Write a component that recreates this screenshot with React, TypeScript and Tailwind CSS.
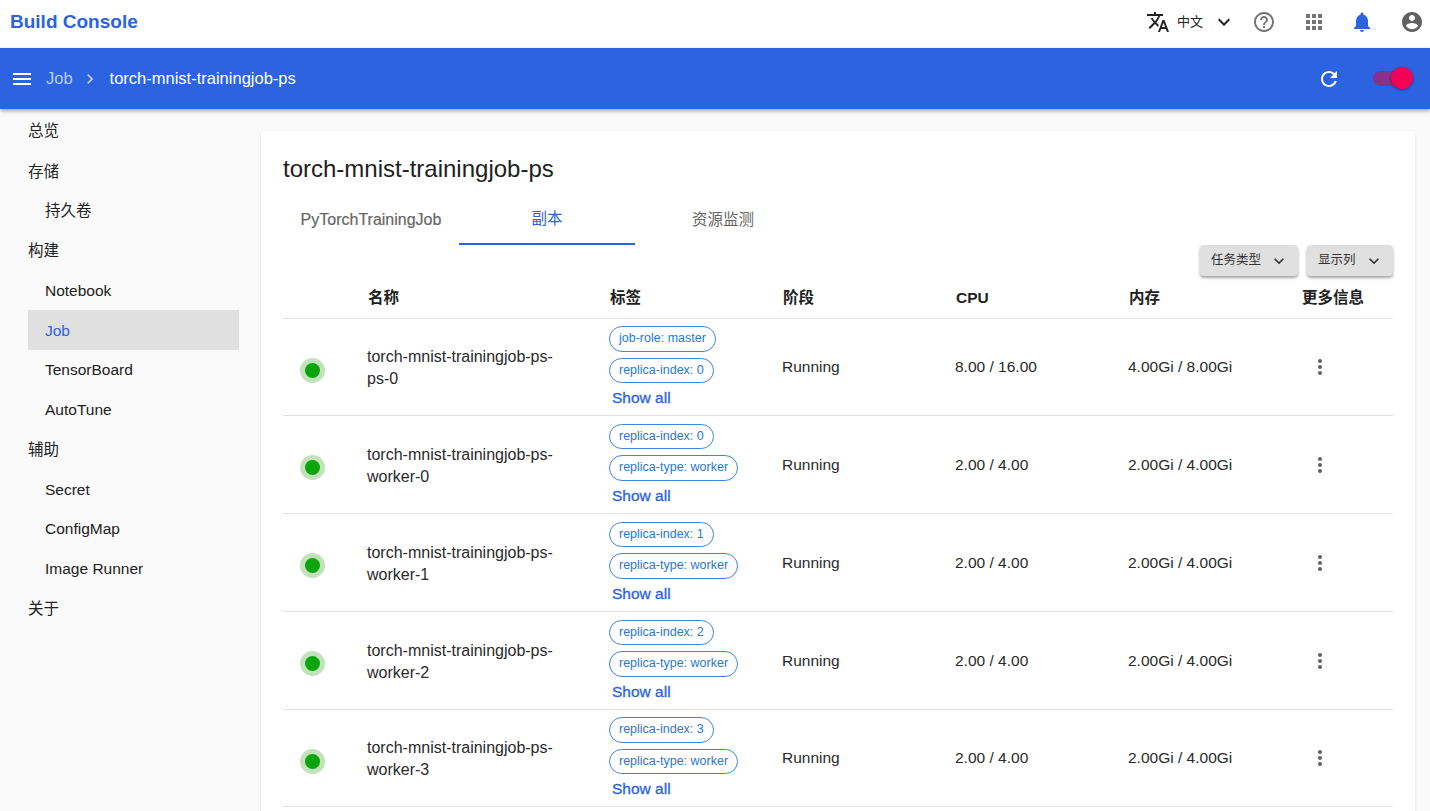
import type { ReactNode } from 'react';
import clsx from 'clsx';

const font = "font-['Liberation_Sans','Noto_Sans_CJK_SC',sans-serif]";

const icons = {
  translate:
    'M12.87 15.07l-2.54-2.51.03-.03c1.74-1.94 2.98-4.17 3.71-6.53H17V4h-7V2H8v2H1v1.99h11.17C11.5 7.92 10.44 9.75 9 11.35 8.07 10.32 7.3 9.19 6.69 8h-2c.73 1.63 1.73 3.17 2.98 4.56l-5.09 5.02L4 19l5-5 3.11 3.11.76-2.04zM18.5 10h-2L12 22h2l1.12-3h4.75L21 22h2l-4.5-12zm-2.62 7l1.62-4.33L19.12 17h-3.24z',
  help: 'M11 18h2v-2h-2v2zm1-16C6.48 2 2 6.48 2 12s4.48 10 10 10 10-4.48 10-10S17.52 2 12 2zm0 18c-4.41 0-8-3.59-8-8s3.59-8 8-8 8 3.59 8 8-3.59 8-8 8zm0-14c-2.21 0-4 1.79-4 4h2c0-1.1.9-2 2-2s2 .9 2 2c0 2-3 1.75-3 5h2c0-2.25 3-2.5 3-5 0-2.21-1.79-4-4-4z',
  apps: 'M4 8h4V4H4v4zm6 12h4v-4h-4v4zm-6 0h4v-4H4v4zm0-6h4v-4H4v4zm6 0h4v-4h-4v4zm6-10v4h4V4h-4zm-6 4h4V4h-4v4zm6 6h4v-4h-4v4zm0 6h4v-4h-4v4z',
  bell: 'M12 22c1.1 0 2-.9 2-2h-4c0 1.1.89 2 2 2zm6-6v-5c0-3.07-1.64-5.64-4.5-6.32V4c0-.83-.67-1.5-1.5-1.5s-1.5.67-1.5 1.5v.68C7.63 5.36 6 7.92 6 11v5l-2 2v1h16v-1l-2-2z',
  account:
    'M12 2C6.48 2 2 6.48 2 12s4.48 10 10 10 10-4.48 10-10S17.52 2 12 2zm0 3c1.66 0 3 1.34 3 3s-1.34 3-3 3-3-1.34-3-3 1.34-3 3-3zm0 14.2c-2.5 0-4.71-1.28-6-3.22.03-1.99 4-3.08 6-3.08 1.99 0 5.97 1.09 6 3.08-1.29 1.94-3.5 3.22-6 3.22z',
  refresh:
    'M17.65 6.35C16.2 4.9 14.21 4 12 4c-4.42 0-7.99 3.58-7.99 8s3.57 8 7.99 8c3.73 0 6.84-2.55 7.73-6h-2.08c-.82 2.33-3.04 4-5.65 4-3.31 0-6-2.69-6-6s2.69-6 6-6c1.66 0 3.14.69 4.22 1.78L13 11h7V4l-2.35 2.35z',
  menu: 'M3 18h18v-2H3v2zm0-5h18v-2H3v2zm0-7v2h18V6H3z',
  expand: 'M16.59 8.59L12 13.17 7.41 8.59 6 10l6 6 6-6z',
  chevron: 'M10 6L8.59 7.41 13.17 12l-4.58 4.59L10 18l6-6z',
  more: 'M12 8c1.1 0 2-.9 2-2s-.9-2-2-2-2 .9-2 2 .9 2 2 2zm0 2c-1.1 0-2 .9-2 2s.9 2 2 2 2-.9 2-2-.9-2-2-2zm0 6c-1.1 0-2 .9-2 2s.9 2 2 2 2-.9 2-2-.9-2-2-2z',
};

function Icon({ d, className }: { d: string; className?: string }) {
  return (
    <svg viewBox="0 0 24 24" fill="currentColor" className={clsx('shrink-0', className)}>
      <path d={d} />
    </svg>
  );
}

const sideItems = [
  { name: '总览', first: true },
  { name: '存储' },
  { name: '持久卷', sub: true },
  { name: '构建' },
  { name: 'Notebook', sub: true },
  { name: 'Job', sub: true, active: true },
  { name: 'TensorBoard', sub: true },
  { name: 'AutoTune', sub: true },
  { name: '辅助' },
  { name: 'Secret', sub: true },
  { name: 'ConfigMap', sub: true },
  { name: 'Image Runner', sub: true },
  { name: '关于' },
];

const replicas = [
  { suffix: 'ps-0', height: 'h-[97px]', labels: ['job-role: master', 'replica-index: 0'], cpu: '8.00 / 16.00', mem: '4.00Gi / 8.00Gi' },
  { suffix: 'worker-0', height: 'h-[98px]', labels: ['replica-index: 0', 'replica-type: worker'], cpu: '2.00 / 4.00', mem: '2.00Gi / 4.00Gi' },
  { suffix: 'worker-1', height: 'h-[98px]', labels: ['replica-index: 1', 'replica-type: worker'], cpu: '2.00 / 4.00', mem: '2.00Gi / 4.00Gi' },
  { suffix: 'worker-2', height: 'h-[98px]', labels: ['replica-index: 2', 'replica-type: worker'], cpu: '2.00 / 4.00', mem: '2.00Gi / 4.00Gi' },
  { suffix: 'worker-3', height: 'h-[97px]', labels: ['replica-index: 3', 'replica-type: worker'], cpu: '2.00 / 4.00', mem: '2.00Gi / 4.00Gi' },
];

const gridCols = 'grid grid-cols-[84px_242px_173px_173px_173px_174px_91px]';

function FilterButton({ children, className }: { children: ReactNode; className: string }) {
  return (
    <button
      className={clsx(
        'flex h-[31px] items-center justify-between rounded bg-[#e0e0e0] pl-[11px] pr-[9px] text-[12.5px] text-[#333] shadow-[0_2px_3px_rgba(0,0,0,0.35)]',
        className
      )}
    >
      <span>{children}</span>
      <Icon d={icons.expand} className="h-[20px] w-[20px]" />
    </button>
  );
}

function Row({ row }: { row: (typeof replicas)[number] }) {
  return (
    <div className={clsx(gridCols, row.height, 'items-center border-b border-[#e0e0e0] text-[15.5px] text-[#2a2a2a]')}>
      <div className="mt-[6px] pl-[17px]">
        <div className="flex h-[25px] w-[25px] items-center justify-center rounded-full bg-[#c3e1ba]">
          <div className="h-[15px] w-[15px] rounded-full bg-[#0aa50a]" />
        </div>
      </div>
      <div className="w-[200px] pt-[2px] text-[16px] leading-[22px]">
        torch-mnist-trainingjob-ps-
        <br />
        {row.suffix}
      </div>
      <div className="flex flex-col items-start gap-[6px]">
        {row.labels.map((label) => (
          <span
            key={label}
            className="flex h-[25.5px] items-center rounded-full border border-[#3f87dc] px-[9px] text-[12.5px] text-[#2a77d4]"
          >
            {label}
          </span>
        ))}
        <span className="-mt-[1px] pl-[3px] text-[15.5px] leading-[20px] text-[#2b63e0] [-webkit-text-stroke:0.3px_#2b63e0]">
          Show all
        </span>
      </div>
      <div>Running</div>
      <div>{row.cpu}</div>
      <div>{row.mem}</div>
      <div className="pl-[6px]">
        <Icon d={icons.more} className="h-[24px] w-[24px] text-[#616161]" />
      </div>
    </div>
  );
}

export default function App() {
  return (
    <div className={clsx(font, 'flex h-[811px] w-[1430px] flex-col overflow-hidden bg-[#fafafa]')}>
      <header className="flex h-[48px] items-center justify-between bg-white pb-[4px] pl-[10px] pr-[6px]">
        <div className="text-[19px] font-bold text-[#2b63e0]">Build Console</div>
        <div className="flex items-center">
          <Icon d={icons.translate} className="h-[24px] w-[24px] text-[#212121]" />
          <span className="ml-[7px] text-[13px] text-[#212121]">中文</span>
          <Icon d={icons.expand} className="ml-[9px] h-[24px] w-[24px] text-[#212121]" />
          <Icon d={icons.help} className="ml-[16px] h-[24px] w-[24px] text-[#757575]" />
          <Icon d={icons.apps} className="ml-[26px] h-[24px] w-[24px] text-[#757575]" />
          <Icon d={icons.bell} className="ml-[24px] h-[24px] w-[24px] text-[#2b63e0]" />
          <Icon d={icons.account} className="ml-[26px] h-[24px] w-[24px] text-[#616161]" />
        </div>
      </header>

      <div className="relative z-10 flex h-[61px] items-center justify-between bg-[#2b63e0] pl-[10px] pr-[17px] text-white shadow-[0_2px_4px_rgba(0,0,0,0.35)]">
        <div className="flex items-center text-[16.5px]">
          <Icon d={icons.menu} className="h-[24px] w-[24px]" />
          <span className="ml-[12px] text-white/70">Job</span>
          <Icon d={icons.chevron} className="ml-[7px] h-[20px] w-[20px] text-white/70" />
          <span className="ml-[10px]">torch-mnist-trainingjob-ps</span>
        </div>
        <div className="flex items-center">
          <Icon d={icons.refresh} className="h-[24px] w-[24px]" />
          <div className="relative ml-[32px] h-[15px] w-[40px] rounded-full bg-[#8a2f8e]">
            <div className="absolute right-0 top-[-4px] h-[22px] w-[22px] rounded-full bg-[#f50057] shadow-[0_1px_3px_rgba(0,0,0,0.4)]" />
          </div>
        </div>
      </div>

      <div className="flex min-h-0 flex-1">
        <aside className="w-[261px] shrink-0 pl-[28px] pr-[22px] text-[15.5px] text-[#212121]">
          {sideItems.map((item) => (
            <div
              key={item.name}
              className={clsx(
                'flex items-center',
                item.first ? 'h-[42.25px]' : 'h-[39.75px]',
                item.sub && 'pl-[17px]',
                item.active && 'bg-[#e0e0e0] text-[#2b63e0]'
              )}
            >
              {item.name}
            </div>
          ))}
        </aside>

        <main className="min-w-0 flex-1 pr-[15px] pt-[22px]">
          <div className="rounded bg-white px-[22px] pb-[40px] pt-[22px] shadow-[0_1px_3px_rgba(0,0,0,0.12)]">
            <h1 className="pt-px text-[24px] leading-[30px] text-[#212121]">torch-mnist-trainingjob-ps</h1>
            <div className="mt-[13px] flex h-[48px] text-[15.5px]">
              <div className="flex w-[176px] items-center justify-center pb-[3px] text-[16px] text-[#666] [-webkit-text-stroke:0.2px_#666]">PyTorchTrainingJob</div>
              <div className="flex w-[176px] items-center justify-center border-b-2 border-[#2b63e0] pb-[3px] text-[#2b63e0]">副本</div>
              <div className="flex w-[176px] items-center justify-center pb-[3px] text-[#666]">资源监测</div>
            </div>
            <div className="flex justify-end gap-[9px]">
              <FilterButton className="w-[98px]">任务类型</FilterButton>
              <FilterButton className="w-[86px]">显示列</FilterButton>
            </div>
            <div className={clsx(gridCols, 'h-[43px] items-center border-b border-[#e0e0e0] pt-[2px] text-[15.5px] font-bold text-[#212121]')}>
              <div />
              <div className="pl-px">名称</div>
              <div className="pl-px">标签</div>
              <div className="pl-px">阶段</div>
              <div className="pl-px">CPU</div>
              <div className="pl-px">内存</div>
              <div>更多信息</div>
            </div>
            {replicas.map((row) => (
              <Row key={row.suffix} row={row} />
            ))}
          </div>
        </main>
      </div>
    </div>
  );
}
